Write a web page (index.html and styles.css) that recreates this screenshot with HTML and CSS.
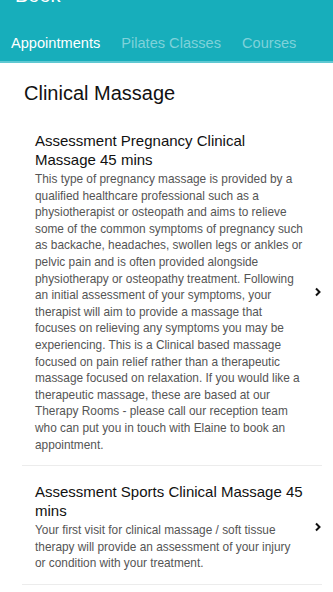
FILE: index.html
```html
<!DOCTYPE html>
<html>
<head>
<meta charset="utf-8">
<link rel="stylesheet" href="styles.css">
</head>
<body>
<header class="header">
  <div class="title">Book</div>
  <nav class="tabs">
    <span class="tab active">Appointments</span>
    <span class="tab">Pilates Classes</span>
    <span class="tab">Courses</span>
  </nav>
</header>
<main class="content">
  <h1 class="section">Clinical Massage</h1>
  <ul class="list">
    <li class="item">
      <div class="text">
        <h2 class="name">Assessment Pregnancy Clinical Massage 45 mins</h2>
        <p class="desc">This type of pregnancy massage is provided by a qualified healthcare professional such as a physiotherapist or osteopath and aims to relieve some of the common symptoms of pregnancy such as backache, headaches, swollen legs or ankles or pelvic pain and is often provided alongside physiotherapy or osteopathy treatment. Following an initial assessment of your symptoms, your therapist will aim to provide a massage that focuses on relieving any symptoms you may be experiencing. This is a Clinical based massage focused on pain relief rather than a therapeutic massage focused on relaxation. If you would like a therapeutic massage, these are based at our Therapy Rooms - please call our reception team who can put you in touch with Elaine to book an appointment.</p>
      </div>
      <svg class="chev" width="8" height="10" viewBox="0 0 8 10"><path d="M2 1.5 L5.5 5 L2 8.5" fill="none" stroke="#111" stroke-width="2"/></svg>
    </li>
    <li class="item">
      <div class="text">
        <h2 class="name">Assessment Sports Clinical Massage 45 mins</h2>
        <p class="desc">Your first visit for clinical massage / soft tissue therapy will provide an assessment of your injury or&nbsp;condition with your treatment.</p>
      </div>
      <svg class="chev" width="8" height="10" viewBox="0 0 8 10"><path d="M2 1.5 L5.5 5 L2 8.5" fill="none" stroke="#111" stroke-width="2"/></svg>
    </li>
  </ul>
</main>
</body>
</html>
```
FILE: styles.css
```css
* { box-sizing: border-box; }
html, body { margin: 0; padding: 0; background: #fff; }
body { font-family: "Liberation Sans", Arial, sans-serif; color: #1a1a1a; overflow: hidden; }
.header {
  background: #17aebb;
  height: 63px;
  border-bottom: 2px solid #5fc8d2;
  overflow: hidden;
}
.title {
  color: #fff;
  font-size: 20px;
  line-height: 24px;
  margin: -17px 0 0 15px;
}
.tabs {
  display: flex;
  gap: 21px;
  padding: 27px 0 0 11px;
}
.tab {
  font-size: 14.6px;
  line-height: 18px;
  color: #7fd2da;
}
.tab.active { color: #fff; }
.content { padding: 18px 0 0 22px; }
.section {
  font-size: 20px;
  font-weight: normal;
  line-height: 24px;
  margin: 0 0 19px 2px;
  color: #111;
}
.list { list-style: none; margin: 0; padding: 0; width: 300px; }
.item {
  display: flex;
  align-items: center;
  border-bottom: 1px solid #ececec;
  padding: 7px 0 12px 13px;
}
.item + .item { padding-top: 16px; }
.text { flex: 1; min-width: 0; padding-right: 9px; }
.name {
  font-size: 15px;
  font-weight: normal;
  line-height: 19px;
  margin: 0 0 2px;
  color: #111;
}
.desc {
  font-size: 11.85px;
  line-height: 16.6px;
  margin: 0;
  color: #555;
}
.chev { flex: none; }
```
